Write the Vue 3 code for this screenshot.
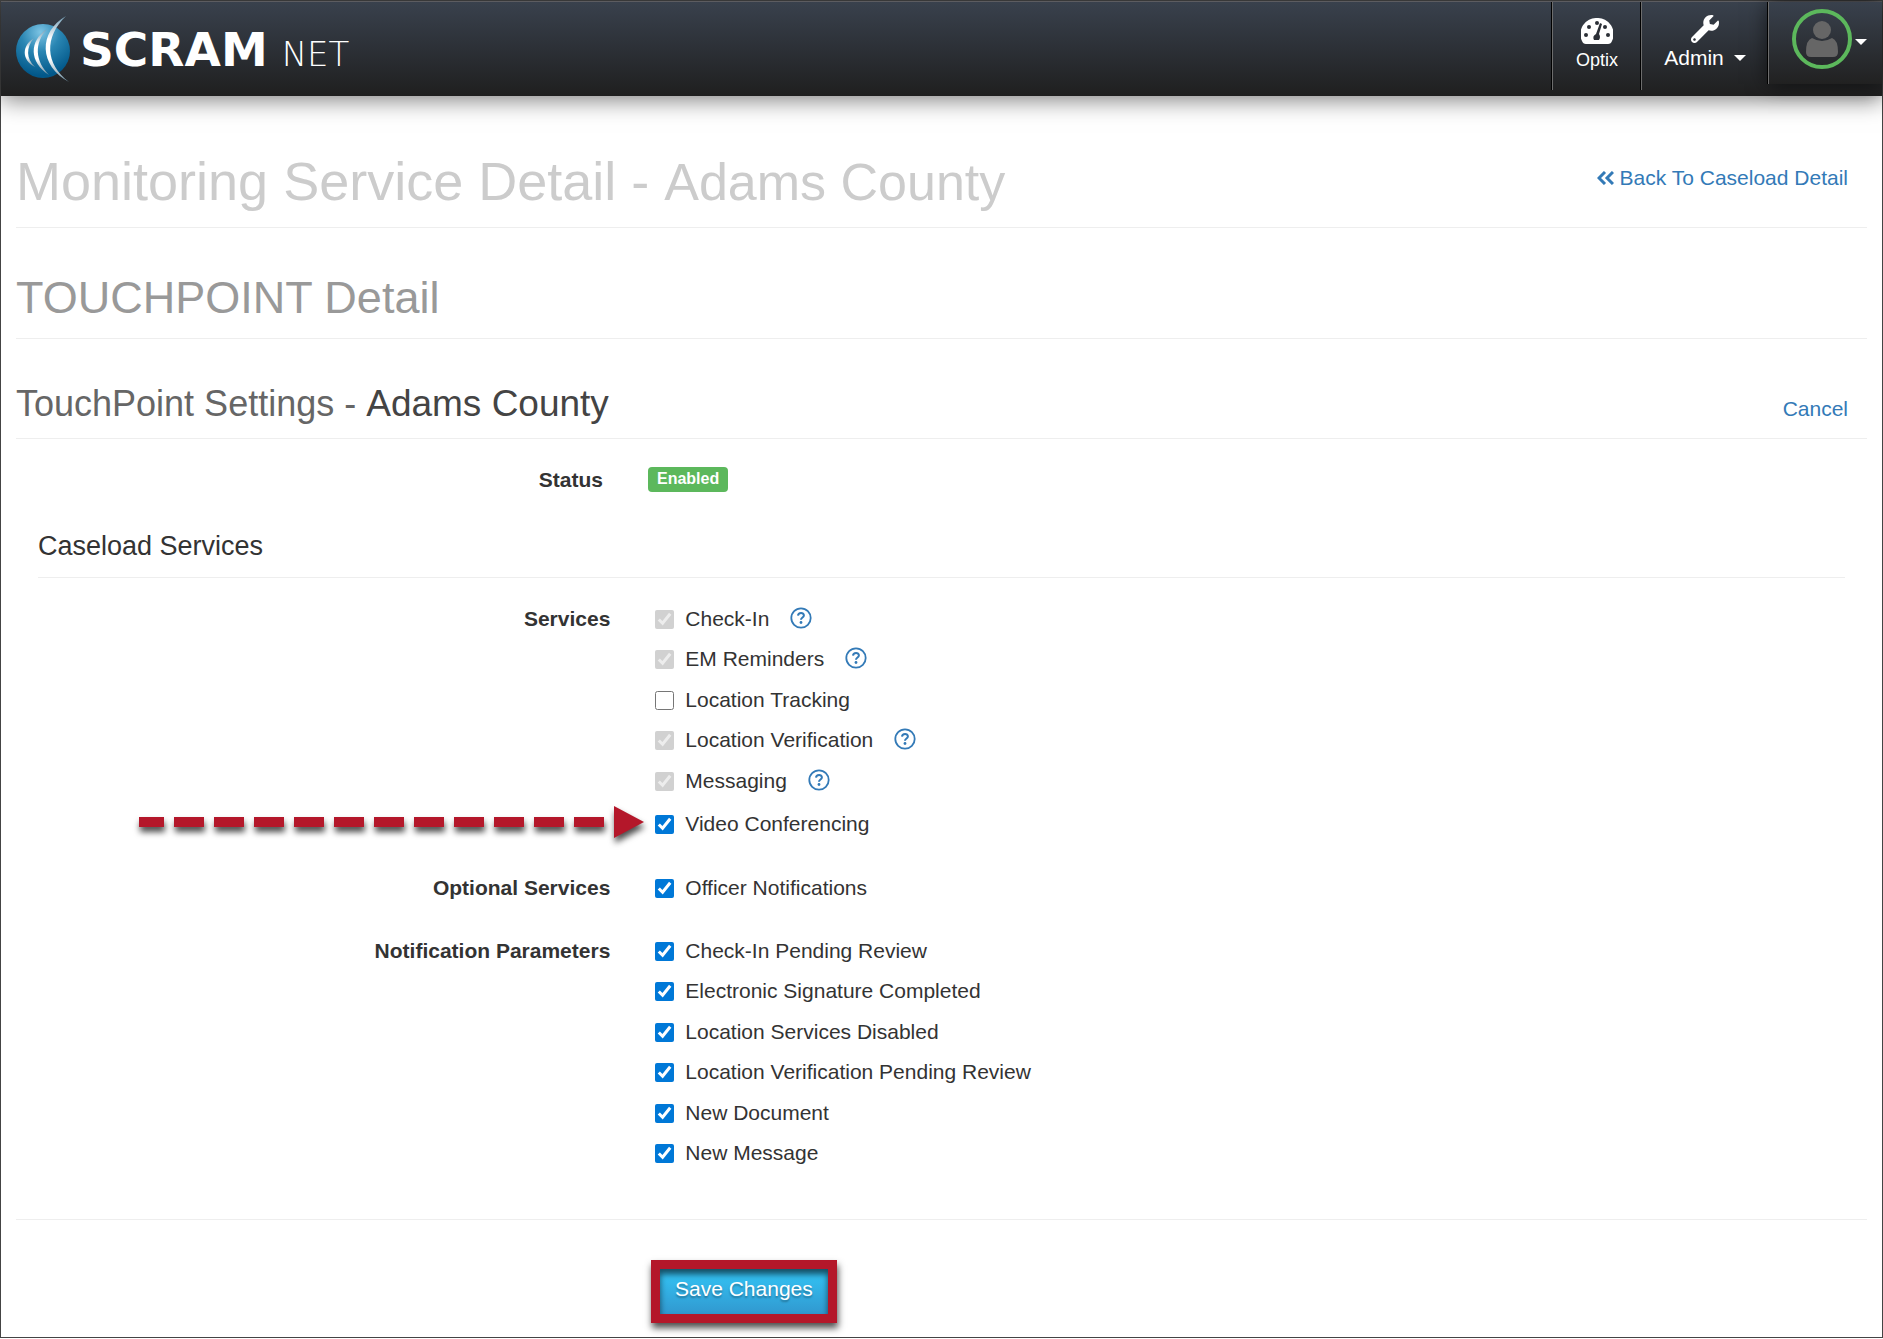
<script setup>
import { reactive } from 'vue'

const groups = reactive([
  {
    title: 'Services',
    items: [
      { label: 'Check-In', checked: true, disabled: true, help: true },
      { label: 'EM Reminders', checked: true, disabled: true, help: true },
      { label: 'Location Tracking', checked: false },
      { label: 'Location Verification', checked: true, disabled: true, help: true },
      { label: 'Messaging', checked: true, disabled: true, help: true },
      { label: 'Video Conferencing', checked: true, arrow: true }
    ]
  },
  { title: 'Optional Services', items: [{ label: 'Officer Notifications', checked: true }] },
  {
    title: 'Notification Parameters',
    items: [
      { label: 'Check-In Pending Review', checked: true },
      { label: 'Electronic Signature Completed', checked: true },
      { label: 'Location Services Disabled', checked: true },
      { label: 'Location Verification Pending Review', checked: true },
      { label: 'New Document', checked: true },
      { label: 'New Message', checked: true }
    ]
  }
])
const dashes = Array.from({ length: 11 }, (_, i) => 35 + i * 40)
</script>

<template>
  <div class="page">
    <header class="topbar">
      <a class="brand" href="#">
        <svg class="globe" width="56" height="68" viewBox="0 0 56 68" aria-hidden="true">
          <defs>
            <radialGradient id="ball" cx="0.45" cy="0.15" r="0.8">
              <stop offset="0" stop-color="#7cc4e4" />
              <stop offset="0.45" stop-color="#2a86b3" />
              <stop offset="1" stop-color="#02588a" />
            </radialGradient>
            <linearGradient id="beam" x1="0" y1="0" x2="0" y2="1">
              <stop offset="0" stop-color="#6f9cb5" />
              <stop offset="0.35" stop-color="#ffffff" />
              <stop offset="0.65" stop-color="#ffffff" />
              <stop offset="1" stop-color="#6d8fa2" />
            </linearGradient>
          </defs>
          <circle cx="27" cy="36" r="27" fill="url(#ball)" />
          <path d="M18 23C6 30 5 45 19 52C10 44 10 32 18 23Z" fill="url(#beam)" />
          <path d="M31 14C13 26 13 47 33 60C19 46 18 28 31 14Z" fill="url(#beam)" />
          <path d="M50 1C22 17 23 51 53 67C29 49 28 22 50 1Z" fill="url(#beam)" />
        </svg>
        <span class="logotype"><span class="word">SCRAM</span><span class="net">NET</span></span>
      </a>
      <nav class="menu">
        <a class="item optix" href="#">
          <svg width="32" height="26" viewBox="0 0 32 26" aria-hidden="true">
            <path d="M16 0A16 16 0 0 0 1 23Q2 26 5 26H27Q30 26 31 23A16 16 0 0 0 16 0Z" fill="#fff" />
            <g fill="#2b2f36">
              <circle cx="5" cy="17" r="2" /><circle cx="8" cy="9" r="2" /><circle cx="16" cy="5" r="2" />
              <circle cx="24" cy="9" r="2" /><circle cx="27" cy="17" r="2" />
              <path d="M19 5L21 6L18 16Q20 19 18 22H13Q11 18 15 16Z" />
            </g>
          </svg>
          <span>Optix</span>
        </a>
        <a class="item admin" href="#">
          <svg width="28" height="28" viewBox="0 0 512 512" aria-hidden="true">
            <path fill="#fff" d="M507.700 109.100c-2.200-9-13.500-12.100-20.100-5.500l-74.400 74.400-67.900-11.300L334 98.900l74.400-74.400c6.600-6.600 3.400-17.900-5.700-20.200-47.400-11.700-99.600.9-136.600 37.900-39.600 39.600-50.600 97.100-34.100 147.200L18.700 402.800c-25 25-25 65.500 0 90.500s65.500 25 90.500 0l213.200-213.200c50.100 16.700 107.500 5.700 147.400-34.200 37.100-37.100 49.700-89.300 37.900-136.800zM64 472c-13.200 0-24-10.800-24-24s10.700-24 24-24 24 10.700 24 24-10.700 24-24 24z" />
          </svg>
          <span class="with-caret">Admin <i class="caret"></i></span>
        </a>
        <a class="item user" href="#" aria-label="Account">
          <svg width="60" height="60" viewBox="0 0 60 60" aria-hidden="true">
            <circle cx="30" cy="30" r="28" fill="none" stroke="#5cb85c" stroke-width="4" />
            <circle cx="30" cy="21" r="9" fill="#666" />
            <path d="M20 29Q30 35 40 29Q46 31 46 43Q46 48 41 48H19Q14 48 14 43Q14 31 20 29Z" fill="#666" />
          </svg>
          <i class="caret"></i>
        </a>
      </nav>
    </header>

    <main class="content">
      <div class="heading first">
        <h1>Monitoring Service Detail - <small>Adams County</small></h1>
        <a class="back" href="#">
          <svg width="17" height="14" viewBox="0 0 17 14" aria-hidden="true">
            <path d="M8 1L2 7L8 13M16 1L10 7L16 13" fill="none" stroke="currentColor" stroke-width="3" />
          </svg>
          Back To Caseload Detail
        </a>
      </div>
      <div class="heading second"><h2>TOUCHPOINT Detail</h2></div>
      <div class="heading third">
        <h3>TouchPoint Settings - <span>Adams County</span></h3>
        <a href="#">Cancel</a>
      </div>

      <form @submit.prevent>
        <div class="row status">
          <div class="name">Status</div>
          <div class="field"><span class="badge">Enabled</span></div>
        </div>
        <section class="services">
          <h4>Caseload Services</h4>
          <div v-for="g in groups" :key="g.title" class="row" role="group" :aria-label="g.title">
            <div class="name">{{ g.title }}</div>
            <div class="field">
              <div v-for="it in g.items" :key="it.label" class="check" :class="{ pointed: it.arrow }">
                <svg v-if="it.arrow" class="arrow" width="505" height="32" viewBox="0 0 505 32" aria-hidden="true">
                  <g fill="#b4172a">
                    <rect x="0" y="11" width="25" height="10" />
                    <rect v-for="x in dashes" :key="x" :x="x" y="11" width="30" height="10" />
                    <path d="M475 0L505 16L475 32Z" />
                  </g>
                </svg>
                <label>
                  <input v-model="it.checked" type="checkbox" :disabled="it.disabled">
                  <span>{{ it.label }}</span>
                </label>
                <a v-if="it.help" class="help" href="#" :aria-label="'About ' + it.label">
                  <svg width="22" height="22" viewBox="0 0 22 22" aria-hidden="true">
                    <circle cx="11" cy="11" r="9.700" fill="none" stroke="currentColor" stroke-width="1.800" />
                    <path d="M8 8.600C8.300 5.200 14 5.200 13.900 8.500C13.800 10.500 11 10.500 11 12.800" fill="none" stroke="currentColor" stroke-width="2" />
                    <circle cx="11" cy="15.500" r="1.400" fill="currentColor" />
                  </svg>
                </a>
              </div>
            </div>
          </div>
        </section>
        <div class="actions"><div class="frame"><button type="submit">Save Changes</button></div></div>
      </form>
    </main>
  </div>
</template>

<style>
body { margin: 0; background: #fff; }
</style>

<style scoped>
* { box-sizing: border-box; }
.page {
  border: 1px solid #444;
  font-family: "Liberation Sans", Arial, sans-serif;
  font-size: 21px;
  line-height: 30px;
  color: #333;
}
a { color: #337ab7; text-decoration: none; }
.topbar {
  display: flex;
  justify-content: space-between;
  height: 95px;
  border-top: 1px solid #5c5c60;
  background: linear-gradient(#39414d, #1f1f1f);
  box-shadow: 0 4px 22px rgba(0, 0, 0, 0.5);
}
.brand { display: flex; align-items: flex-start; padding: 13px 0 0 15px; }
.globe { flex: none; margin-right: 8px; }
.logotype {
  display: flex;
  align-items: baseline;
  gap: 14px;
  padding-top: 5px;
  color: #fff;
  font-family: "DejaVu Sans", sans-serif;
  line-height: 60px;
}
.word { font-size: 47px; font-weight: 700; }
.net { font-size: 34px; font-weight: 200; }
.menu { display: flex; align-items: flex-start; }
.item {
  display: flex;
  flex-direction: column;
  align-items: center;
  height: 88px;
  border-left: 1px solid #6d6d6d;
  box-shadow: -1px 0 #000;
  color: #fff;
}
.optix { width: 89px; padding-top: 16px; gap: 1px; font-size: 18px; }
.admin { width: 127px; padding-top: 13px; }
.with-caret { display: flex; align-items: center; gap: 10px; }
.user {
  flex-direction: row;
  align-items: flex-start;
  width: 114px;
  height: 82px;
  padding: 7px 0 0 23px;
  gap: 3px;
  background: linear-gradient(#39414d, #212121);
  box-shadow: -1px 0 #000, 0 0 20px rgba(0, 0, 0, 0.6);
}
.caret { width: 12px; height: 6px; border: 6px solid transparent; border-top-color: #fff; border-bottom: 0; }
.user .caret { margin-top: 30px; }
.content { padding: 0 15px 14px; }
.heading {
  display: flex;
  justify-content: space-between;
  align-items: center;
  padding-right: 19px;
  border-bottom: 1px solid #eee;
}
h1, h2, h3, h4 { margin: 0; font-weight: 400; }
.first { padding-top: 55px; padding-bottom: 15px; }
.second { padding-top: 45px; padding-bottom: 15px; }
.third { padding-top: 45px; padding-bottom: 14px; }
h1 { font-size: 54px; line-height: 60px; color: #ccc; }
h1 small { font-size: 52px; }
h2 { font-size: 45px; line-height: 50px; color: #999; }
h3 { font-size: 36px; line-height: 40px; color: #666; }
h3 span { font-size: 37px; color: #444; }
.back { margin-bottom: 8px; }
.third a { margin-top: 10px; }
.row { display: grid; grid-template-columns: 1fr 2fr; }
.name { padding-right: 30px; text-align: right; font-weight: 700; }
.field { padding-left: 15px; }
.status { padding-top: 26px; }
.badge {
  display: block;
  width: max-content;
  margin-top: 2px;
  padding: 0 9px 2px;
  border-radius: 4px;
  background: #5cb85c;
  color: #fff;
  font-size: 16px;
  font-weight: 700;
  line-height: 23px;
}
.services { margin: 0 22px; }
h4 { margin-bottom: 26px; padding: 36px 0 16px; border-bottom: 1px solid #eee; font-size: 27px; line-height: 30px; }
.services .row { margin-bottom: 23px; }
.check { display: flex; align-items: flex-start; height: 40px; }
.check:nth-child(even) { height: 41px; }
.pointed { position: relative; margin-top: 3px; }
label { display: flex; align-items: center; gap: 11px; }
input { width: 19px; height: 19px; margin: 0; accent-color: #0078d7; }
.help { height: 22px; margin: 3px 0 0 21px; }
.help svg { display: block; }
.arrow {
  position: absolute;
  top: -3px;
  right: calc(100% + 11px);
  overflow: visible;
  filter: drop-shadow(1px 5px 3px rgba(0, 0, 0, 0.7));
}
.actions { margin-top: 40px; padding: 40px 0 0 635px; border-top: 1px solid #eee; }
.frame { position: relative; width: max-content; border: 9px solid #b4172a; box-shadow: 1px 5px 7px rgba(0, 0, 0, 0.7); }
.frame::after { content: ""; position: absolute; inset: 0; box-shadow: inset 0 5px 6px rgba(0, 0, 0, 0.6); pointer-events: none; }
button {
  display: block;
  padding: 5px 15px 10px;
  border: 0;
  background: linear-gradient(#33bdef 20%, #3198cf);
  color: #fff;
  font: inherit;
  text-shadow: 0 2px 2px rgba(0, 0, 0, 0.3);
}
</style>
